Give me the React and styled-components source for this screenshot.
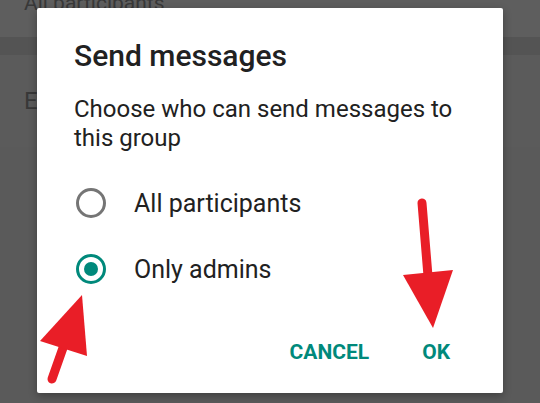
import React from 'react';
import styled, { createGlobalStyle } from 'styled-components';

const GlobalStyle = createGlobalStyle`
  html, body {
    margin: 0;
    padding: 0;
    overflow: hidden;
  }
  body {
    font-family: Roboto, "Noto Sans", Arial, sans-serif;
  }
`;

const teal = '#00897b';

const Screen = styled.div`
  position: relative;
  width: 540px;
  height: 403px;
  overflow: hidden;
  background: #5a5a5a;
`;

const TopRow = styled.div`
  height: 37px;
  padding-left: 24px;
  background: #5e5e5e;
  overflow: hidden;
`;

const DimText = styled.div`
  font-size: ${p => p.$size || 24}px;
  line-height: 29px;
  color: #383838;
  margin-top: ${p => p.$shift || 0}px;
`;

const Gap = styled.div`
  height: 18px;
  background: #545454;
`;

const ListRow = styled.div`
  height: 92px;
  padding-left: 24px;
  display: flex;
  align-items: center;
  background: #5b5b5b;
`;

const Dialog = styled.div`
  position: absolute;
  left: 37px;
  top: 8px;
  width: 466px;
  height: 385px;
  box-sizing: border-box;
  padding: 30px 37px 21px;
  background: #fff;
  border-radius: 2px;
  box-shadow: 0 3px 8px rgba(0, 0, 0, 0.3);
  display: flex;
  flex-direction: column;
`;

const Title = styled.h2`
  margin: 0;
  font-size: 30px;
  line-height: 36px;
  font-weight: 500;
  color: #212121;
`;

const Message = styled.p`
  margin: 21px 0 0;
  font-size: 24px;
  line-height: 29px;
  color: #212121;
`;

const Options = styled.div`
  margin-top: 17px;
  display: flex;
  flex-direction: column;
`;

const Option = styled.label`
  height: 66px;
  display: flex;
  align-items: center;
  gap: 28px;
  padding-left: 2px;
  font-size: 25px;
  color: #212121;
`;

const Radio = styled.span`
  width: 30px;
  height: 30px;
  flex: none;
  box-sizing: border-box;
  border-radius: 50%;
  border: 3px solid ${p => (p.$checked ? teal : '#757575')};
  display: flex;
  align-items: center;
  justify-content: center;
  &::after {
    content: '';
    width: 14px;
    height: 14px;
    border-radius: 50%;
    background: ${p => (p.$checked ? teal : 'transparent')};
  }
`;

const Actions = styled.div`
  margin-top: auto;
  display: flex;
  justify-content: flex-end;
  gap: 53px;
  padding-right: 16px;
`;

const ActionButton = styled.button`
  border: 0;
  background: none;
  padding: 0;
  height: 40px;
  font-family: Roboto, Arial, sans-serif;
  font-size: 21px;
  font-weight: 700;
  color: ${teal};
`;

const Overlay = styled.svg`
  position: absolute;
  left: 0;
  top: 0;
  pointer-events: none;
`;

const arrowRed = '#e91e27';

export default function App() {
  return (
    <>
      <GlobalStyle />
      <Screen>
        <TopRow>
          <DimText $size={21} $shift={-11}>All participants</DimText>
        </TopRow>
        <Gap />
        <ListRow>
          <DimText>Edit group info</DimText>
        </ListRow>

        <Dialog>
          <Title>Send messages</Title>
          <Message>Choose who can send messages to this group</Message>
          <Options>
            <Option>
              <Radio />
              All participants
            </Option>
            <Option>
              <Radio $checked />
              Only admins
            </Option>
          </Options>
          <Actions>
            <ActionButton>CANCEL</ActionButton>
            <ActionButton>OK</ActionButton>
          </Actions>
        </Dialog>

        <Overlay width="540" height="403" viewBox="0 0 540 403">
          <line x1="52" y1="379" x2="70" y2="328" stroke={arrowRed} strokeWidth="9" strokeLinecap="round" />
          <polygon points="82,295 40,341 87,356" fill={arrowRed} />
          <line x1="422" y1="203" x2="428" y2="276" stroke={arrowRed} strokeWidth="9" strokeLinecap="round" />
          <polygon points="403,275 453,270 433,328" fill={arrowRed} />
        </Overlay>
      </Screen>
    </>
  );
}
